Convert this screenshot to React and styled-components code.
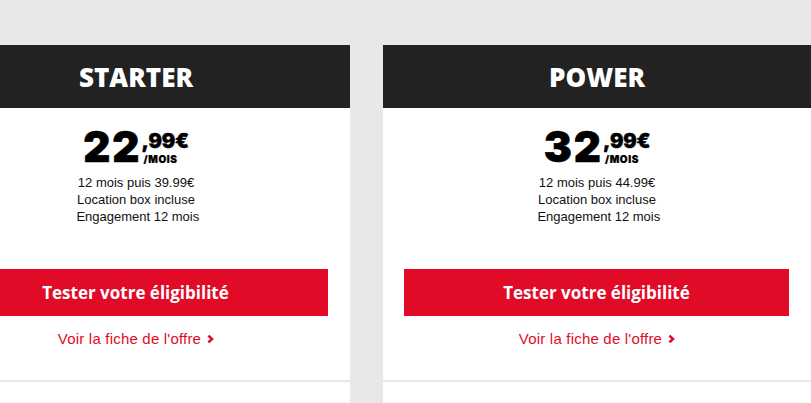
import React from "react";
import styled, { createGlobalStyle } from "styled-components";

const Global = createGlobalStyle`
  html, body { margin: 0; padding: 0; background: #e8e8e8; overflow: hidden; }
  body { font-family: "Liberation Sans", Arial, sans-serif; }
`;

const Page = styled.div`
  display: flex;
  align-items: flex-start;
  gap: 33px;
  padding-top: 45px;
  margin-left: -78px;
  height: 403px;
  box-sizing: border-box;
`;

const Card = styled.section`
  flex: 0 0 428px;
  min-height: 358px;
  background: #fff;
  display: flex;
  flex-direction: column;
  & > * { flex-shrink: 0; }
`;

const Header = styled.h2`
  margin: 0;
  height: 63px;
  background: #222;
  color: #fff;
  display: flex;
  align-items: center;
  justify-content: center;
  font-family: "Open Sans", sans-serif;
  font-weight: 800;
  font-size: 26px;
`;

const Body = styled.div`
  display: flex;
  flex-direction: column;
  align-items: center;
  padding: 18px 0 44px;
`;

const Price = styled.div`
  display: flex;
  align-items: flex-start;
  color: #000;
  font-family: "Inter", sans-serif;
`;

const Amount = styled.span`
  font-size: 42px;
  font-weight: 900;
  line-height: 42px;
  letter-spacing: 2px;
  -webkit-text-stroke: 0.6px #000;
`;

const PriceSide = styled.span`
  display: flex;
  flex-direction: column;
  margin-top: 5px;
`;

const Cents = styled.span`
  font-size: 20px;
  font-weight: 900;
  line-height: 20px;
  letter-spacing: -0.2px;
  -webkit-text-stroke: 0.4px #000;
`;

const PerMonth = styled.span`
  font-size: 10px;
  font-weight: 900;
  line-height: 12px;
  letter-spacing: 0.6px;
  margin: 2px 0 0 2px;
  -webkit-text-stroke: 0.2px #000;
`;

const Details = styled.div`
  margin-top: 6px;
  font-size: 13px;
  line-height: 17px;
  color: #111;
  text-align: center;
  white-space: pre;
`;

const CtaButton = styled.button`
  margin: 0 22px 0 21px;
  height: 47px;
  border: none;
  background: #e10b28;
  color: #fff;
  font-family: "Open Sans", sans-serif;
  font-weight: 700;
  font-size: 17px;
  cursor: pointer;
`;

const OfferLink = styled.a`
  align-self: center;
  display: inline-flex;
  align-items: center;
  gap: 6px;
  margin-top: 14px;
  color: #e10b28;
  font-size: 15px;
  line-height: 17px;
  letter-spacing: 0.2px;
  text-decoration: none;
`;

const Separator = styled.hr`
  margin: 33px 0 0;
  border: none;
  border-top: 2px solid #e8e8e8;
`;

const Chevron = () => (
  <svg width="7" height="10" viewBox="0 0 7 10">
    <polyline points="1.4,1.6 5,5 1.4,8.4" fill="none" stroke="#e10b28" strokeWidth="2.6" />
  </svg>
);

const offers = [
  { name: "STARTER", euros: "22", cents: ",99€", after: "39.99€" },
  { name: "POWER", euros: "32", cents: ",99€", after: "44.99€" },
];

export default function App() {
  return (
    <>
      <Global />
      <Page>
        {offers.map((o) => (
          <Card key={o.name}>
            <Header>{o.name}</Header>
            <Body>
              <Price>
                <Amount>{o.euros}</Amount>
                <PriceSide>
                  <Cents>{o.cents}</Cents>
                  <PerMonth>/MOIS</PerMonth>
                </PriceSide>
              </Price>
              <Details>
                {`12 mois puis ${o.after}\nLocation box incluse\n Engagement 12 mois`}
              </Details>
            </Body>
            <CtaButton>Tester votre éligibilité</CtaButton>
            <OfferLink href="#">
              Voir la fiche de l'offre <Chevron />
            </OfferLink>
            <Separator />
          </Card>
        ))}
      </Page>
    </>
  );
}
